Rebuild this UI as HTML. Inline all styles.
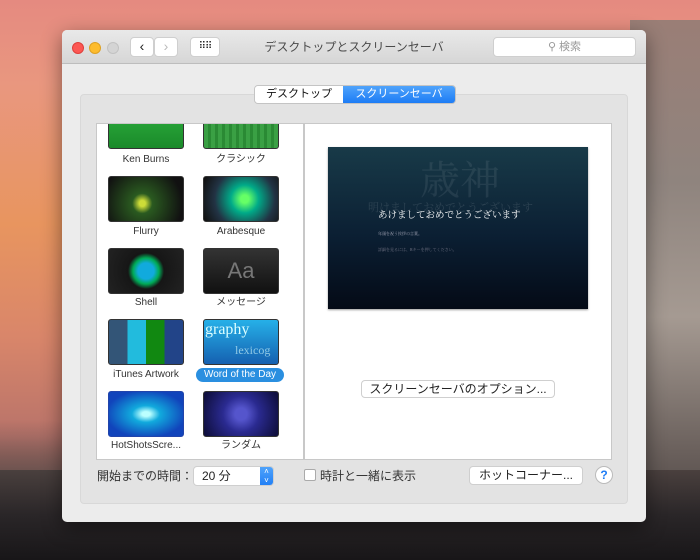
<!DOCTYPE html>
<html><head><meta charset="utf-8"><style>
*{box-sizing:border-box;margin:0;padding:0}
body{width:700px;height:560px;overflow:hidden;position:relative;font-family:"Liberation Sans","Noto Sans CJK JP",sans-serif;
background:linear-gradient(180deg,#e58a80 0%,#e9977f 15%,#e8955f 40%,#d9866a 60%,#b8736a 78%,#6a5550 90%,#2a2426 100%)}
.rock{position:absolute;right:0;top:20px;width:70px;height:540px;background:linear-gradient(180deg,#9a7e76,#8f847e 30%,#a59a92 55%,#6a605c 80%,#3a3434)}
.rock2{position:absolute;left:0;top:470px;width:700px;height:90px;background:linear-gradient(180deg,#4a403e,#2a2628 50%,#181618)}
.rock3{position:absolute;left:0;top:420px;width:62px;height:80px;background:linear-gradient(180deg,rgba(90,70,70,0),#5a4a48)}
.win{position:absolute;left:62px;top:30px;width:584px;height:492px;background:#ececec;border-radius:5px;box-shadow:0 6px 20px rgba(0,0,0,.45);overflow:hidden}
.tb{height:34px;background:linear-gradient(#e9e9e9,#d6d6d6);border-bottom:1px solid #bdbdbd;position:relative}
.dot{position:absolute;top:12px;width:12px;height:12px;border-radius:50%}
.btn{position:absolute;background:#fff;border:1px solid #cfcfcf;border-radius:4px;font-size:12px;color:#222;text-align:center}
.title{position:absolute;left:0;right:0;top:10px;text-align:center;font-size:12px;line-height:14px;color:#4a4a4a}
.box{position:absolute;left:18px;top:64px;width:548px;height:410px;background:#e3e3e3;border:1px solid #d8d8d8;border-radius:4px}
.list{position:absolute;left:34px;top:93px;width:208px;height:337px;background:#fff;border:1px solid #c8c8c8;overflow:hidden}
.prev{position:absolute;left:242px;top:93px;width:308px;height:337px;background:#fff;border:1px solid #c8c8c8}
.th{position:absolute;width:76px;height:46px;border-radius:3px;border:1px solid #333}
.lb{position:absolute;width:100px;text-align:center;font-size:10px;line-height:12px;color:#333}
</style></head><body>
<div class="rock"></div><div class="rock3"></div><div class="rock2"></div>
<div class="win">
 <div class="tb">
  <div class="dot" style="left:10px;background:#fc5753;border:1px solid #de3f3b"></div>
  <div class="dot" style="left:27px;background:#fdbc2e;border:1px solid #dea123"></div>
  <div class="dot" style="left:45px;background:#d4d4d4;border:1px solid #c2c2c2"></div>
  <div class="btn" style="left:68px;top:7px;width:24px;height:20px;font-size:14px;line-height:17px">‹</div>
  <div class="btn" style="left:92px;top:7px;width:24px;height:20px;font-size:14px;line-height:17px;color:#bbb">›</div>
  <div class="btn" style="left:128px;top:7px;width:30px;height:20px;font-size:10px;line-height:17px;letter-spacing:-1px">⠿⠿</div>
  <div class="title">デスクトップとスクリーンセーバ</div>
  <div class="btn" style="left:431px;top:7px;width:143px;height:20px;line-height:18px;color:#999;font-size:11px">⚲ 検索</div>
 </div>
 <div class="box"></div>
 <div style="position:absolute;left:192px;top:55px;width:202px;height:19px;border:1px solid #c4c4c4;border-radius:4px;overflow:hidden;display:flex;font-size:11px">
  <div style="width:88px;background:#fff;text-align:center;line-height:17px;color:#111">デスクトップ</div>
  <div style="flex:1;background:linear-gradient(#4fa3fb,#1d7cf5);color:#fff;text-align:center;line-height:17px">スクリーンセーバ</div>
 </div>
 <div class="list">
  <div class="th" style="left:11px;top:-10px;height:35px;background:linear-gradient(#2aa83a,#1a8a2a)"></div>
  <div class="th" style="left:106px;top:-10px;height:35px;background:repeating-linear-gradient(90deg,#3aa044 0 4px,#2a8a34 4px 7px)"></div>
  <div class="lb" style="left:-1px;top:30px">Ken Burns</div><div class="lb" style="left:94px;top:30px">クラシック</div>
  <div class="th" style="left:11px;top:52px;background:radial-gradient(circle at 45% 60%,#cddc38 0 3px,#2a5a20 10px,#111 40px)"></div>
  <div class="th" style="left:106px;top:52px;background:radial-gradient(circle at 55% 50%,#6f6 0 4px,#0a8 14px,#234 30px,#111 45px)"></div>
  <div class="lb" style="left:-1px;top:102px">Flurry</div><div class="lb" style="left:94px;top:102px">Arabesque</div>
  <div class="th" style="left:11px;top:124px;background:radial-gradient(circle at 50% 50%,#1ad 0 8px,#0a5 13px,#161616 18px,#222)"></div>
  <div class="th" style="left:106px;top:124px;background:linear-gradient(#333,#111);color:#777;font-size:22px;text-align:center;line-height:44px">Aa</div>
  <div class="lb" style="left:-1px;top:173px">Shell</div><div class="lb" style="left:94px;top:173px">メッセージ</div>
  <div class="th" style="left:11px;top:195px;background:linear-gradient(90deg,#357 0 25%,#2bd 25% 50%,#181 50% 75%,#248 75%)"></div>
  <div class="th" style="left:106px;top:195px;background:linear-gradient(#26b0e8,#1560b0);color:#dff;font-family:'Liberation Serif',serif;font-size:16px;overflow:hidden;white-space:nowrap;line-height:20px;padding-left:1px">graphy<br><span style="font-size:12px;opacity:.6;padding-left:30px">lexicog</span></div>
  <div class="lb" style="left:-1px;top:245px">iTunes Artwork</div>
  <div style="position:absolute;left:99px;top:244px;width:88px;height:14px;border-radius:7px;background:#2a8fe0;color:#fff;font-size:10px;text-align:center;line-height:14px">Word of the Day</div>
  <div class="th" style="left:11px;top:267px;background:radial-gradient(ellipse at 50% 50%,#bff 0 4px,#1ad 14px,#14b 40px);border-color:#24a"></div>
  <div class="th" style="left:106px;top:267px;background:radial-gradient(circle at 50% 50%,#55c 0 6px,#2a2a90 18px,#101040 40px)"></div>
  <div class="lb" style="left:-1px;top:316px">HotShotsScre...</div><div class="lb" style="left:94px;top:316px">ランダム</div>
 </div>
 <div class="prev">
  <div style="position:absolute;left:23px;top:23px;width:260px;height:162px;background:linear-gradient(#183a48,#0b1f33 55%,#040a16);box-shadow:0 1px 2px rgba(0,0,0,.4);overflow:hidden;font-family:'Liberation Serif','Noto Serif CJK SC',serif">
   <div style="position:absolute;left:92px;top:12px;font-size:40px;line-height:44px;color:rgba(255,255,255,.08)">歳神</div>
   <div style="position:absolute;left:40px;top:55px;font-size:11px;line-height:12px;color:rgba(255,255,255,.12);white-space:nowrap">明けましておめでとうございます</div>
   <div style="position:absolute;left:50px;top:63px;font-size:9.5px;line-height:12px;color:#fff;white-space:nowrap">あけましておめでとうございます</div>
   <div style="position:absolute;left:50px;top:84px;font-size:4px;color:#aab">年頭を祝う挨拶の言葉。</div>
   <div style="position:absolute;left:50px;top:100px;font-size:4px;color:#778">詳細を見るには、Rキーを押してください。</div>
  </div>
  <div class="btn" style="left:56px;top:256px;width:194px;height:18px;line-height:16px">スクリーンセーバのオプション...</div>
 </div>
 <div style="position:absolute;left:35px;top:439px;font-size:12px;line-height:14px;color:#333">開始までの時間：</div>
 <div class="btn" style="left:131px;top:436px;width:81px;height:20px;text-align:left;padding-left:8px;line-height:18px;overflow:hidden">20 分<div style="position:absolute;right:0;top:0;width:13px;height:20px;background:linear-gradient(#4fa3fb,#1d7cf5);color:#fff;font-size:8px;line-height:9px;text-align:center">˄<br>˅</div></div>
 <div style="position:absolute;left:242px;top:439px;width:12px;height:12px;border:1px solid #aaa;border-radius:2px;background:#fff"></div>
 <div style="position:absolute;left:258px;top:439px;font-size:12px;line-height:14px;color:#333">時計と一緒に表示</div>
 <div class="btn" style="left:407px;top:436px;width:114px;height:19px;line-height:17px">ホットコーナー...</div>
 <div style="position:absolute;left:533px;top:436px;width:18px;height:18px;border-radius:50%;background:#fff;border:1px solid #bbb;color:#1d7cf5;font-size:12px;text-align:center;line-height:16px;font-weight:bold">?</div>
</div>
</body></html>
